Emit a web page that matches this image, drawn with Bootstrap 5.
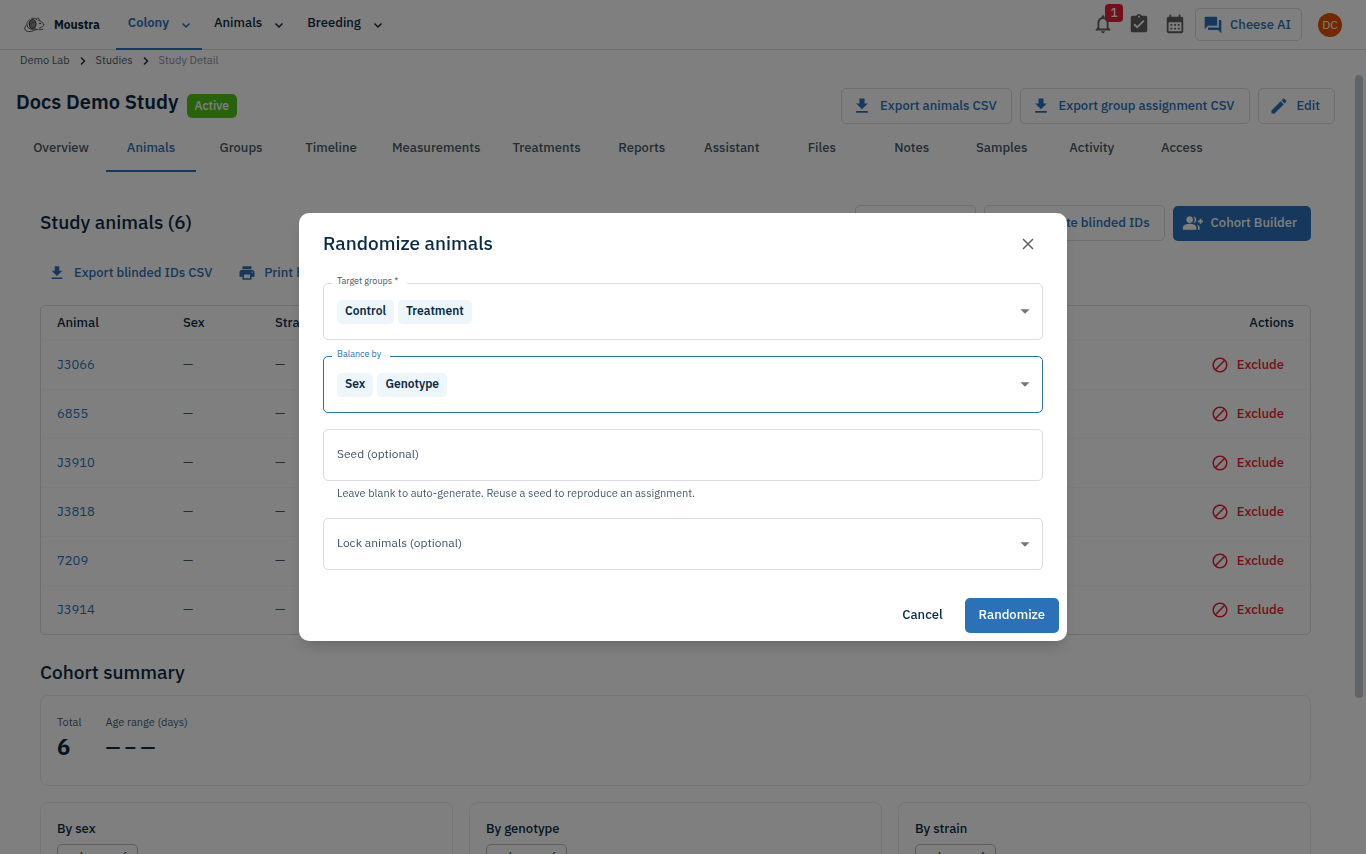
<!DOCTYPE html>
<html lang="en">
<head>
<meta charset="utf-8">
<meta name="viewport" content="width=device-width, initial-scale=1">
<title>Docs Demo Study – Moustra</title>
<link href="https://cdn.jsdelivr.net/npm/bootstrap@5.3.0/dist/css/bootstrap.min.css" rel="stylesheet">
<style>
  :root { --ink: #0b2b45; --muted: #465a69; --blue: #2a71b8; --edge: #dadde1; --red: #e81c30; }
  body { font-family: "IBM Plex Sans", Roboto, sans-serif; font-size: 13px; line-height: 20px; color: var(--ink); background: #fff; }
  svg { fill: currentColor; flex: none; }
  .i22 { width: 22px; height: 22px; }
  .i20 { width: 20px; height: 20px; }
  .i18 { width: 18px; height: 18px; }
  .line-icon { fill: none; stroke: currentColor; }

  /* top bar */
  .topbar { height: 50px; border-bottom: 1px solid var(--edge); padding: 0 24px; }
  .brand-name { font-size: 12px; font-weight: 700; color: var(--ink); }
  .mouse { color: #4a4a4a; }
  .main-menu .nav-link { height: 50px; padding: 0 8px 2px 12px; gap: 9px; font-weight: 500; color: var(--ink); border-bottom: 2px solid transparent; margin-bottom: -1px; }
  .main-menu .nav-link.active { color: var(--blue); font-weight: 600; border-color: var(--blue); }
  .icon-btn { width: 36px; height: 36px; padding: 0 0 2px; border: 0; background: none; color: #616161; }
  .count { top: -3px; left: 20px; width: 18px; height: 18px; padding: 0; border-radius: 4px; background: var(--red); font-size: 12px; font-weight: 500; line-height: 18px; }
  .avatar { width: 24px; height: 24px; background: #e65100; color: #fff; font-size: 12px; line-height: 24px; }

  /* buttons */
  .btn { --bs-btn-font-size: 13px; --bs-btn-font-weight: 500; --bs-btn-line-height: 20px; --bs-btn-border-radius: 5px; display: inline-flex; align-items: center; gap: 8px; white-space: nowrap; }
  .btn-line { height: 36px; padding: 0 14px 0 10px; border: 1px solid var(--edge); color: var(--blue); }
  .btn-solid { height: 35px; padding: 0 14px 2px 10px; border: 0; background: var(--blue); color: #fff; }
  .btn-flat { height: 32px; padding: 0 10px 0 8px; border: 0; color: var(--blue); }
  .btn-cheese { height: 33px; padding: 0 10px 0 7px; margin-left: 2px; gap: 7px; }

  /* breadcrumb */
  .crumbs { height: 22px; padding-left: 20px; font-size: 11px; gap: 10px; }
  .crumbs svg { margin-top: 6px; }
  .crumbs a { color: var(--muted); text-decoration: none; }
  .crumbs .here { color: #8a8f93; }

  /* study page */
  .pane { padding: 16px 0 0 16px; }
  .rail { width: 31px; padding: 3px 3px 0 20px; }
  .thumb { width: 8px; height: 80%; border-radius: 4px; background: #bcc8d0; }
  .study-title { font-size: 20px; font-weight: 600; line-height: 28px; }
  .status { margin-top: 6px; height: 24px; padding: 0 8px; border-radius: 5px; background: #52c41a; font-size: 12px; font-weight: 500; line-height: 24px; }
  .study-tabs .nav-link { min-width: 90px; height: 48px; padding: 0 16px; line-height: 46px; text-align: center; font-weight: 500; color: var(--muted); border-bottom: 2px solid transparent; padding-top: 1px; }
  .study-tabs .nav-link.active { color: var(--blue); border-color: var(--blue); }
  .study-panel { padding: 33px 24px 0; }
  .section-title { font-size: 19px; font-weight: 500; line-height: 26px; padding-bottom: 2px; }

  .grid-box { border: 1px solid var(--edge); border-radius: 5px; }
  .animals { --bs-table-bg: transparent; table-layout: fixed; color: var(--muted); }
  .animals th, .animals td { height: 49px; padding: 0 16px; vertical-align: middle; border-bottom: 1px solid #f9f9f9; }
  .animals th { height: 34px; font-weight: 500; color: var(--ink); }
  .animals tr:last-child td { border-bottom: 0; }
  .animals td a { color: var(--blue); text-decoration: none; }
  .c-animal { width: 126px; }
  .c-sex { width: 92px; }
  .btn-exclude { height: 32px; padding: 0 10px; border: 0; color: var(--red); }

  .panel-box { border: 1px solid #ebebeb; border-radius: 8px; padding: 16px; }
  .totals { padding: 17px 16px 22px; }
  .totals dt { font-size: 11px; font-weight: 400; line-height: 18px; color: var(--muted); }
  .totals dd { font-size: 22px; font-weight: 700; line-height: 32px; margin: 0; }
  .totals .range { font-size: 19px; font-weight: 600; }
  .chip-line { height: 24px; padding: 0 8px; margin-top: 5px; border: 1px solid #bdbdbd; border-radius: 5px; font-size: 12px; line-height: 22px; }

  /* dialog */
  .modal-dialog { max-width: 768px; }
  .modal-content { border: 0; border-radius: 10px; color: var(--ink); box-shadow: 0 8px 16px -6px rgba(0,0,0,.25); }
  .modal-header { height: 62px; padding: 0 24px; border: 0; }
  .modal-title { font-size: 19px; font-weight: 500; line-height: 28px; padding-bottom: 2px; }
  .close-x { width: 30px; height: 30px; padding: 0 0 2px; border: 0; background: none; color: #616161; }
  .modal-body { padding: 8px 24px 20px; gap: 16px; }
  .modal-footer { padding: 8px; border: 0; gap: 8px; }
  .modal-footer > * { margin: 0; }
  .modal-footer .btn { padding: 0 14px 2px; }
  .field { position: relative; min-height: 52px; border: 1px solid var(--edge); border-radius: 5px; padding: 0 8px 0 13px; gap: 4px; }
  .field.tall { min-height: 57px; }
  .field:focus-within, .field.on { border-color: var(--blue); }
  .field input { border: 0; outline: 0; background: none; padding: 0 0 2px; min-width: 30px; font-size: 12px; color: var(--ink); }
  .field input::placeholder { color: #3f5364; opacity: 1; }
  .field .notch { position: absolute; top: -10px; left: 8px; padding: 0 9px 0 5px; background: #fff; font-size: 9px; line-height: 14px; color: var(--muted); }
  .field.on .notch { color: var(--blue); }
  .chip { height: 24px; padding: 0 8px; border-radius: 5px; background: #edf6fa; font-size: 12px; font-weight: 600; line-height: 22px; }
  .drop { width: 20px; height: 24px; padding: 0 0 1px; border: 0; background: none; color: #757575; }
  .hint { margin-top: 3px; padding-left: 14px; font-size: 11px; line-height: 18px; color: var(--muted); }
</style>
</head>
<body>
<svg class="d-none">
  <symbol id="i-download" viewBox="0 0 24 24"><path d="M19 9h-4V3H9v6H5l7 7 7-7zM5 18v2h14v-2H5z"/></symbol>
  <symbol id="i-block" viewBox="0 0 24 24"><path d="M12 2C6.480 2 2 6.480 2 12s4.480 10 10 10 10-4.480 10-10S17.520 2 12 2zM4 12c0-4.420 3.580-8 8-8 1.850 0 3.550.63 4.900 1.690L5.690 16.900C4.630 15.550 4 13.850 4 12zm8 8c-1.850 0-3.550-.63-4.900-1.690L18.310 7.100C19.370 8.450 20 10.150 20 12c0 4.420-3.580 8-8 8z"/></symbol>
  <symbol id="i-chev-down" viewBox="0 0 16 16"><path d="M4.500 6.500 8 10l3.500-3.500" fill="none" stroke="currentColor" stroke-width="1.500"/></symbol>
  <symbol id="i-chev-right" viewBox="0 0 6 10"><path d="M1 1.500 4.500 5 1 8.500" fill="none" stroke="currentColor" stroke-width="1.400"/></symbol>
  <symbol id="i-caret" viewBox="0 0 24 24"><path d="M7 10l5 5 5-5z"/></symbol>
  <symbol id="i-shuffle" viewBox="0 0 24 24"><path d="M10.590 9.170 5.410 4 4 5.410l5.170 5.170 1.420-1.410zM14.500 4l2.040 2.040L4 18.590 5.410 20 17.960 7.460 20 9.500V4h-5.500zm.33 9.410-1.410 1.410 3.130 3.130L14.500 20H20v-5.500l-2.040 2.040-3.130-3.130z"/></symbol>
</svg>

<div class="vh-100 d-flex flex-column overflow-hidden">
  <header class="topbar d-flex align-items-start flex-shrink-0">
    <a href="#" class="d-flex align-items-center gap-2 text-decoration-none h-100 me-3">
      <svg class="line-icon mouse" width="22" height="18" viewBox="0 0 22 18" stroke-width=".9" stroke-linecap="round">
        <path d="M19.800 8.800C18.800 6.200 17 4.800 14.200 4.200M19.800 8.800c.2 1.400-1.800 2.200-4.300 3.200"/>
        <path d="M12.400 2.800c1.300-1.500 3-.8 2.800.9M7.500 2.600c2-.8 4.200-.5 5.400 1"/>
        <ellipse cx="8.600" cy="8" rx="3.300" ry="4.300" fill="#8c8c8c" stroke-width="1.300"/>
        <path d="M9.800 6.400c-1.700-.6-2.900.6-2.700 2"/>
        <path d="M5.500 3.800C2.500 5.500 2 9.500 4.500 12c2 1.700 4.800 1.300 7.500 1"/>
        <path d="M2.300 9C-.4 12 .2 15 4.500 15.600c4.500.6 6.300-2.800 10-2.200 1.600.3 3 .5 4.300 0"/>
        <circle cx="16" cy="7.400" r=".6" fill="currentColor"/>
      </svg>
      <span class="brand-name">Moustra</span>
    </a>
    <nav class="nav main-menu flex-nowrap" aria-label="Main">
      <a class="nav-link active d-flex align-items-center" href="#">Colony <svg width="16" height="16" class="mt-1"><use href="#i-chev-down"/></svg></a>
      <a class="nav-link d-flex align-items-center" href="#">Animals <svg width="16" height="16" class="mt-1"><use href="#i-chev-down"/></svg></a>
      <a class="nav-link d-flex align-items-center" href="#">Breeding <svg width="16" height="16" class="mt-1"><use href="#i-chev-down"/></svg></a>
    </nav>
    <div class="d-flex align-items-center ms-auto h-100">
      <button class="icon-btn position-relative" type="button" aria-label="Notifications">
        <svg class="i22" viewBox="0 0 24 24"><path d="M12 22c1.100 0 2-.9 2-2h-4c0 1.100.89 2 2 2zm6-6v-5c0-3.070-1.640-5.640-4.500-6.320V4c0-.83-.67-1.500-1.500-1.500s-1.500.67-1.500 1.500v.68C7.630 5.360 6 7.920 6 11v5l-2 2v1h16v-1l-2-2zm-2 1H8v-6c0-2.480 1.510-4.500 4-4.500s4 2.020 4 4.500v6z"/></svg>
        <span class="badge count position-absolute">1</span>
      </button>
      <button class="icon-btn" type="button" aria-label="Tasks">
        <svg class="i22" viewBox="0 0 24 24"><path d="M19 3h-4.180C14.400 1.840 13.300 1 12 1c-1.300 0-2.400.84-2.820 2H5c-1.100 0-2 .9-2 2v14c0 1.100.9 2 2 2h14c1.100 0 2-.9 2-2V5c0-1.100-.9-2-2-2zm-7 0c.55 0 1 .45 1 1s-.45 1-1 1-1-.45-1-1 .45-1 1-1zm-2 14l-4-4 1.410-1.410L10 14.170l6.590-6.590L18 9l-8 8z"/></svg>
      </button>
      <button class="icon-btn" type="button" aria-label="Calendar">
        <svg class="i22" viewBox="0 0 24 24"><path d="M19 4h-1V2h-2v2H8V2H6v2H5c-1.110 0-1.990.9-1.990 2L3 20c0 1.100.89 2 2 2h14c1.100 0 2-.9 2-2V6c0-1.100-.9-2-2-2zm0 16H5V10h14v10zM9 14H7v-2h2v2zm4 0h-2v-2h2v2zm4 0h-2v-2h2v2zm-8 4H7v-2h2v2zm4 0h-2v-2h2v2zm4 0h-2v-2h2v2z"/></svg>
      </button>
      <button class="btn btn-line btn-cheese me-3" type="button">
        <svg class="i20" viewBox="0 0 24 24"><path d="M21 6h-2v9H6v2c0 .55.45 1 1 1h11l4 4V7c0-.55-.45-1-1-1zm-4 6V3c0-.55-.45-1-1-1H3c-.55 0-1 .45-1 1v14l4-4h10c.55 0 1-.45 1-1z"/></svg>Cheese AI</button>
      <span class="avatar rounded-circle text-center">DC</span>
    </div>
  </header>

  <nav class="crumbs d-flex align-items-start flex-shrink-0" aria-label="Breadcrumb">
    <a href="#">Demo Lab</a>
    <svg width="6" height="10"><use href="#i-chev-right"/></svg>
    <a href="#">Studies</a>
    <svg width="6" height="10"><use href="#i-chev-right"/></svg>
    <span class="here">Study Detail</span>
  </nav>

  <div class="d-flex flex-grow-1 overflow-hidden">
    <main class="pane flex-grow-1">
      <div class="d-flex align-items-start gap-2">
        <h1 class="study-title mb-0">Docs Demo Study</h1>
        <span class="badge status">Active</span>
        <div class="d-flex gap-2 ms-auto">
          <button class="btn btn-line" type="button"><svg class="i20"><use href="#i-download"/></svg>Export animals CSV</button>
          <button class="btn btn-line" type="button"><svg class="i20"><use href="#i-download"/></svg>Export group assignment CSV</button>
          <button class="btn btn-line" type="button"><svg class="i20" viewBox="0 0 24 24"><path d="M3 17.250V21h3.750L17.810 9.940l-3.750-3.750L3 17.250zM20.710 7.040c.39-.39.39-1.020 0-1.410l-2.340-2.340c-.39-.39-1.020-.39-1.410 0l-1.830 1.830 3.750 3.750 1.830-1.830z"/></svg>Edit</button>
        </div>
      </div>

      <nav class="nav study-tabs flex-nowrap" aria-label="Study sections">
        <a class="nav-link" href="#">Overview</a>
        <a class="nav-link active" href="#">Animals</a>
        <a class="nav-link" href="#">Groups</a>
        <a class="nav-link" href="#">Timeline</a>
        <a class="nav-link" href="#">Measurements</a>
        <a class="nav-link" href="#">Treatments</a>
        <a class="nav-link" href="#">Reports</a>
        <a class="nav-link" href="#">Assistant</a>
        <a class="nav-link" href="#">Files</a>
        <a class="nav-link" href="#">Notes</a>
        <a class="nav-link" href="#">Samples</a>
        <a class="nav-link" href="#">Activity</a>
        <a class="nav-link" href="#">Access</a>
      </nav>

      <section class="study-panel">
        <div class="d-flex align-items-center">
          <h2 class="section-title mb-0">Study animals (6)</h2>
          <div class="d-flex align-items-end gap-2 ms-auto">
            <button class="btn btn-line" type="button"><svg class="i20"><use href="#i-shuffle"/></svg>Randomize</button>
            <button class="btn btn-line" type="button"><svg class="i20"><use href="#i-shuffle"/></svg>Generate blinded IDs</button>
            <button class="btn btn-solid" type="button"><svg class="i20" viewBox="0 0 24 24"><path d="M22 9V7h-2v2h-2v2h2v2h2v-2h2V9zM8 12c2.210 0 4-1.790 4-4s-1.790-4-4-4-4 1.790-4 4 1.790 4 4 4zm0 1c-2.670 0-8 1.340-8 4v3h16v-3c0-2.660-5.330-4-8-4zm4.510-8.950C13.430 5.110 14 6.490 14 8s-.57 2.890-1.490 3.950C14.470 11.700 16 10.040 16 8s-1.530-3.700-3.490-3.950zm4.020 9.780C17.420 14.660 18 15.700 18 17v3h2v-3c0-1.450-1.590-2.510-3.470-3.170z"/></svg>Cohort Builder</button>
          </div>
        </div>
        <div class="d-flex gap-2 my-3">
          <button class="btn btn-flat" type="button"><svg class="i18"><use href="#i-download"/></svg>Export blinded IDs CSV</button>
          <button class="btn btn-flat" type="button"><svg class="i18" viewBox="0 0 24 24"><path d="M19 8H5c-1.660 0-3 1.340-3 3v6h4v4h12v-4h4v-6c0-1.660-1.340-3-3-3zm-3 11H8v-5h8v5zm3-7c-.55 0-1-.45-1-1s.45-1 1-1 1 .45 1 1-.45 1-1 1zm-1-9H6v4h12V3z"/></svg>Print blinded IDs</button>
        </div>

        <div class="grid-box">
          <table class="table animals mb-0">
            <thead>
              <tr><th class="c-animal">Animal</th><th class="c-sex">Sex</th><th>Strain</th><th>Genotype</th><th>Group</th><th class="text-end">Actions</th></tr>
            </thead>
            <tbody>
              <tr><td><a href="#">J3066</a></td><td>—</td><td>—</td><td>—</td><td>—</td><td class="text-end"><button class="btn btn-exclude" type="button"><svg class="i18"><use href="#i-block"/></svg>Exclude</button></td></tr>
              <tr><td><a href="#">6855</a></td><td>—</td><td>—</td><td>—</td><td>—</td><td class="text-end"><button class="btn btn-exclude" type="button"><svg class="i18"><use href="#i-block"/></svg>Exclude</button></td></tr>
              <tr><td><a href="#">J3910</a></td><td>—</td><td>—</td><td>—</td><td>—</td><td class="text-end"><button class="btn btn-exclude" type="button"><svg class="i18"><use href="#i-block"/></svg>Exclude</button></td></tr>
              <tr><td><a href="#">J3818</a></td><td>—</td><td>—</td><td>—</td><td>—</td><td class="text-end"><button class="btn btn-exclude" type="button"><svg class="i18"><use href="#i-block"/></svg>Exclude</button></td></tr>
              <tr><td><a href="#">7209</a></td><td>—</td><td>—</td><td>—</td><td>—</td><td class="text-end"><button class="btn btn-exclude" type="button"><svg class="i18"><use href="#i-block"/></svg>Exclude</button></td></tr>
              <tr><td><a href="#">J3914</a></td><td>—</td><td>—</td><td>—</td><td>—</td><td class="text-end"><button class="btn btn-exclude" type="button"><svg class="i18"><use href="#i-block"/></svg>Exclude</button></td></tr>
            </tbody>
          </table>
        </div>

        <h2 class="section-title mt-4 mb-2">Cohort summary</h2>
        <dl class="panel-box totals d-flex gap-4 mb-3">
          <div><dt>Total</dt><dd>6</dd></div>
          <div><dt>Age range (days)</dt><dd class="range">— – —</dd></div>
        </dl>
        <div class="row gx-3">
          <div class="col-4"><div class="panel-box"><div class="fw-medium">By sex</div><span class="chip-line d-inline-block">unknown: 6</span></div></div>
          <div class="col-4"><div class="panel-box"><div class="fw-medium">By genotype</div><span class="chip-line d-inline-block">unknown: 6</span></div></div>
          <div class="col-4"><div class="panel-box"><div class="fw-medium">By strain</div><span class="chip-line d-inline-block">unknown: 6</span></div></div>
        </div>
      </section>
    </main>
    <div class="rail flex-shrink-0" aria-hidden="true"><div class="thumb"></div></div>
  </div>
</div>

<div class="modal-backdrop show"></div>
<div class="modal show d-block" tabindex="-1" role="dialog" aria-modal="true" aria-labelledby="dlg-title">
  <div class="modal-dialog modal-dialog-centered">
    <form class="modal-content">
      <div class="modal-header d-flex justify-content-between">
        <h2 class="modal-title" id="dlg-title">Randomize animals</h2>
        <button class="close-x" type="button" aria-label="Close"><svg class="line-icon" width="12" height="12" viewBox="0 0 12 12" stroke-width="1.500"><path d="M1 1l10 10M11 1 1 11"/></svg></button>
      </div>
      <div class="modal-body d-flex flex-column">
        <div class="field tall d-flex align-items-center">
          <label class="notch" for="groups">Target groups *</label>
          <span class="chip">Control</span><span class="chip">Treatment</span>
          <input class="flex-grow-1" id="groups" type="text" role="combobox" aria-expanded="false">
          <button class="drop d-flex align-items-center" type="button" aria-label="Open target groups"><svg class="i22"><use href="#i-caret"/></svg></button>
        </div>
        <div class="field tall on d-flex align-items-center">
          <label class="notch" for="balance">Balance by</label>
          <span class="chip">Sex</span><span class="chip">Genotype</span>
          <input class="flex-grow-1" id="balance" type="text" role="combobox" aria-expanded="false">
          <button class="drop d-flex align-items-center" type="button" aria-label="Open balance by"><svg class="i22"><use href="#i-caret"/></svg></button>
        </div>
        <div>
          <div class="field d-flex align-items-center">
            <label class="visually-hidden" for="seed">Seed (optional)</label>
            <input class="flex-grow-1" id="seed" type="text" placeholder="Seed (optional)">
          </div>
          <div class="hint">Leave blank to auto-generate. Reuse a seed to reproduce an assignment.</div>
        </div>
        <div class="field d-flex align-items-center">
          <label class="visually-hidden" for="lock">Lock animals (optional)</label>
          <input class="flex-grow-1" id="lock" type="text" role="combobox" aria-expanded="false" placeholder="Lock animals (optional)">
          <button class="drop d-flex align-items-center" type="button" aria-label="Open lock animals"><svg class="i22"><use href="#i-caret"/></svg></button>
        </div>
      </div>
      <div class="modal-footer">
        <button class="btn btn-solid bg-transparent text-reset" type="button">Cancel</button>
        <button class="btn btn-solid" type="button">Randomize</button>
      </div>
    </form>
  </div>
</div>
<script src="https://cdn.jsdelivr.net/npm/bootstrap@5.3.0/dist/js/bootstrap.bundle.min.js"></script>
</body>
</html>
